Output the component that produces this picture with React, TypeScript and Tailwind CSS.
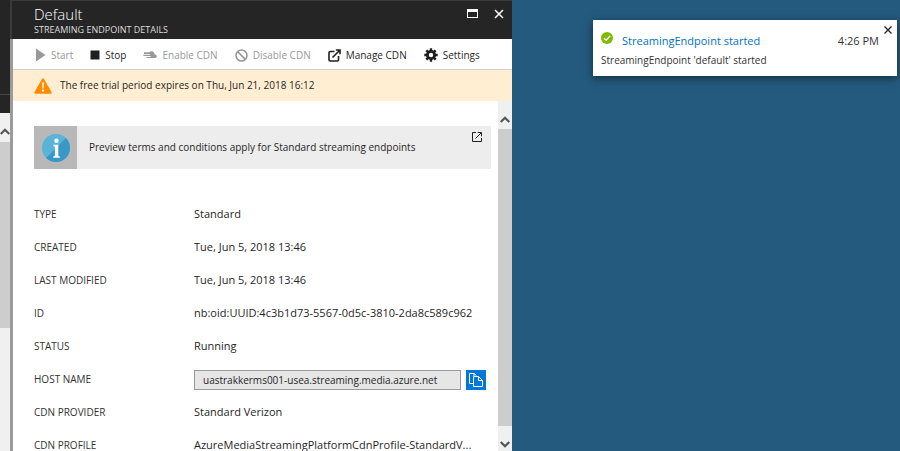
import type { ReactNode } from "react";

const details = [
  { label: "TYPE", value: "Standard" },
  { label: "CREATED", value: "Tue, Jun 5, 2018 13:46" },
  { label: "LAST MODIFIED", value: "Tue, Jun 5, 2018 13:46" },
  { label: "ID", value: "nb:oid:UUID:4c3b1d73-5567-0d5c-3810-2da8c589c962" },
  { label: "STATUS", value: "Running" },
  { label: "HOST NAME", value: "uastrakkerms001-usea.streaming.media.azure.net", copy: true },
  { label: "CDN PROVIDER", value: "Standard Verizon" },
  { label: "CDN PROFILE", value: "AzureMediaStreamingPlatformCdnProfile-StandardV..." },
];

function CloseIcon() {
  return (
    <svg className="size-[10px]" viewBox="0 0 10 10" fill="none" stroke="currentColor" strokeWidth="1.5">
      <path d="M1 1l8 8M9 1L1 9" />
    </svg>
  );
}

function Chevron({ down = false }: { down?: boolean }) {
  return (
    <svg className="h-[7px] w-[10px] text-[#555555]" viewBox="0 0 10 7" fill="none" stroke="currentColor" strokeWidth="2.2">
      {down ? <path d="M0.7 1l4.3 4.3L9.3 1" /> : <path d="M0.7 6L5 1.7 9.3 6" />}
    </svg>
  );
}

function PlayIcon() {
  return (
    <svg className="h-[14px] w-[11px]" viewBox="0 0 11 14" fill="currentColor">
      <path d="M1 0.500v13l9.500-6.500z" />
    </svg>
  );
}

function StopIcon() {
  return (
    <svg className="size-[10px]" viewBox="0 0 10 10" fill="currentColor">
      <path d="M0.500 0.500h9v9h-9z" />
    </svg>
  );
}

function CdnIcon() {
  return (
    <svg className="h-[9px] w-[14px]" viewBox="0 0 14 9" fill="currentColor">
      <path d="M1 1.200h5.200L7.400 0.400c1.600-.5 3.300.1 3.800 1.500l.3 1.400c1.400.1 2.200.9 2.200 2.100 0 1-.8 1.700-1.900 1.700H5.200c-1.300 0-2.100-.4-2.300-1.100h4.600v-.9H0.400v-1.300h6.500v-.9H1z" />
    </svg>
  );
}

function BlockedIcon() {
  return (
    <svg className="size-[13px]" viewBox="0 0 13 13" fill="none" stroke="currentColor" strokeWidth="1.600">
      <circle cx="6.500" cy="6.500" r="5.500" />
      <path d="M2.600 2.600l7.800 7.800" />
    </svg>
  );
}

function ManageIcon() {
  return (
    <svg className="size-[13px]" viewBox="0 0 13 13" fill="none" stroke="currentColor" strokeWidth="1.600">
      <path d="M6.500 2.500H2.300c-.8 0-1.300.5-1.300 1.300v6.900c0 .8.5 1.300 1.300 1.300h6.900c.8 0 1.300-.5 1.300-1.300V7" />
      <path d="M4.500 8.500L11.500 1.500M7.800 1H12v4.200" />
    </svg>
  );
}

function GearIcon() {
  return (
    <svg className="size-[14px]" viewBox="0 0 14 14" fill="none" stroke="currentColor">
      <circle cx="7" cy="7" r="3.600" strokeWidth="2.800" />
      <path
        strokeWidth="2.400"
        d="M7 0.300v2.700M7 11v2.700M0.300 7H3M11 7h2.700M2.300 2.300l1.800 1.800M9.900 9.900l1.800 1.800M2.300 11.700l1.800-1.800M9.900 4.100l1.800-1.800"
      />
    </svg>
  );
}

function WarningIcon() {
  return (
    <svg className="h-[16px] w-[18px]" viewBox="0 0 18 16">
      <path d="M8 0.900Q9 -0.500 10 0.900L17.500 14Q18 15.700 16.500 15.700H1.500Q0 15.700 0.500 14z" fill="#ff8c00" />
      <path d="M8.100 4.500h1.800L9.600 10.500H8.400z" fill="#fff" />
      <circle cx="9" cy="12.600" r="1.100" fill="#fff" />
    </svg>
  );
}

function InfoIcon() {
  return (
    <svg className="size-7" viewBox="0 0 28 28">
      <circle cx="14" cy="14" r="14" fill="#59b4d9" />
      <path d="M23.900 4.100A14 14 0 0 1 4.100 23.900z" fill="#3999c6" />
      <circle cx="14.500" cy="6.800" r="2.200" fill="#fff" />
      <path d="M11.300 10.800h5v11l1.500.8v1.200h-6.500v-1.200l1.600-.8V12.700l-1.600-.7z" fill="#fff" />
    </svg>
  );
}

function LaunchIcon() {
  return (
    <svg className="size-[10px]" viewBox="0 0 10 10" fill="none" stroke="currentColor" strokeWidth="1">
      <path d="M4 0.500H0.500v9h9V6M3.500 6.500L9 1M5.700 0.500h3.800v3.800" />
    </svg>
  );
}

function CopyIcon() {
  return (
    <svg className="size-[14px]" viewBox="0 0 14 14" fill="none" stroke="#fff" strokeWidth="1">
      <path d="M4.500 10.500h-4v-10h4.700L7.500 2.800M4.500 13.500v-10h5l4 4v6zM9.500 3.500v4h4" />
      <path d="M5 0.500v2.500" />
    </svg>
  );
}

function Command({ icon, disabled, children }: { icon: ReactNode; disabled?: boolean; children: ReactNode }) {
  return (
    <button
      type="button"
      disabled={disabled}
      className="flex items-center gap-[5px] text-[10px] whitespace-nowrap text-[#1f1f1f] disabled:text-[#999999]"
    >
      {icon}
      {children}
    </button>
  );
}

export default function App() {
  return (
    <div className="relative flex h-screen overflow-hidden bg-[#235a7d] font-['Open_Sans','Noto_Sans',sans-serif] text-[#1f1f1f]">
      <aside className="flex w-[10px] shrink-0 flex-col bg-[#f0f0f0]">
        <div className="h-[95px] shrink-0 border-b border-[#444444] bg-[#252525]" />
        <div className="h-[18px] shrink-0 bg-[#252525]" />
        <div className="flex h-[29px] shrink-0 items-center justify-center pt-2">
          <Chevron />
        </div>
        <div className="h-[186px] shrink-0 bg-[#cdcdcd]" />
      </aside>

      <main className="flex w-[502px] shrink-0 flex-col">
        <header className="flex h-[39px] shrink-0 justify-between border-t border-l-2 border-[#3b3b3b] bg-[#252525] pr-2 pl-[22px] text-white">
          <div className="pt-[3px]">
            <h1 className="text-[15px] leading-5 font-light">Default</h1>
            <p className="text-[9px] leading-3 text-[#dddddd]">STREAMING ENDPOINT DETAILS</p>
          </div>
          <div className="flex h-[25px] items-center gap-4">
            <button type="button" aria-label="Maximize" className="h-[9px] w-[11px] border border-t-[3px] border-white" />
            <button type="button" aria-label="Close blade">
              <CloseIcon />
            </button>
          </div>
        </header>

        <div className="flex min-h-0 flex-1 flex-col border-l-[3px] border-[#9b9b9b] bg-white">
          <nav className="flex h-[31px] shrink-0 items-center gap-[17px] border-b border-[#d0d0d0] pt-[2px] pl-[22px]">
            <Command icon={<PlayIcon />} disabled>Start</Command>
            <Command icon={<StopIcon />}>Stop</Command>
            <Command icon={<CdnIcon />} disabled>Enable CDN</Command>
            <Command icon={<BlockedIcon />} disabled>Disable CDN</Command>
            <Command icon={<ManageIcon />}>Manage CDN</Command>
            <Command icon={<GearIcon />}>Settings</Command>
          </nav>

          <div className="flex h-[31px] shrink-0 items-center gap-2 bg-[#ffeed2] pl-[21px] text-[10px]">
            <WarningIcon />
            The free trial period expires on Thu, Jun 21, 2018 16:12
          </div>

          <div className="flex min-h-0 flex-1">
            <div className="min-w-0 flex-1 overflow-hidden pt-[25px] pr-[7px] pl-[21px]">
              <div className="flex h-[43px] bg-[#ededed]">
                <div className="flex w-[43px] items-center justify-center bg-[#b8b8b8]">
                  <InfoIcon />
                </div>
                <p className="flex-1 self-center pl-3 text-[10px]">
                  Preview terms and conditions apply for Standard streaming endpoints
                </p>
                <a href="#terms" aria-label="Open preview terms" className="pt-[6px] pr-[9px]">
                  <LaunchIcon />
                </a>
              </div>

              <dl className="pt-[29px]">
                {details.map(({ label, value, copy }) => (
                  <div key={label} className="flex h-[33px] items-center">
                    <dt className="w-40 shrink-0 text-[10px] text-[#333333]">
                      {copy ? <label htmlFor="host-name">{label}</label> : label}
                    </dt>
                    {copy ? (
                      <dd className="flex flex-1 gap-[5px] pr-[5px]">
                        <input
                          id="host-name"
                          readOnly
                          value={value}
                          className="h-5 min-w-0 flex-1 border border-[#999999] bg-[#e6e6e6] px-2 text-[10px]"
                        />
                        <button
                          type="button"
                          aria-label="Copy host name"
                          className="flex size-5 items-center justify-center bg-[#0078d7]"
                        >
                          <CopyIcon />
                        </button>
                      </dd>
                    ) : (
                      <dd className="min-w-0 flex-1 text-[11px] whitespace-nowrap">{value}</dd>
                    )}
                  </div>
                ))}
              </dl>
            </div>

            <div className="flex w-[14px] shrink-0 flex-col items-center bg-[#f0f0f0]">
              <div className="flex h-7 shrink-0 items-center pt-2">
                <Chevron />
              </div>
              <div className="w-full flex-1 bg-[#cdcdcd]" />
              <div className="flex h-[25px] shrink-0 items-center pt-3">
                <Chevron down />
              </div>
            </div>
          </div>
        </div>
      </main>

      <section
        role="status"
        className="absolute top-5 right-[3px] w-[304px] bg-white pt-3 pr-[18px] pb-[6px] pl-2 shadow-[0_2px_8px_rgba(0,0,0,0.5)]"
      >
        <div className="flex items-start">
          <svg className="size-3" viewBox="0 0 12 12">
            <circle cx="6" cy="6" r="6" fill="#7fba00" />
            <path d="M3 6.200l2.200 2.100 3.900-4.400" fill="none" stroke="#fff" strokeWidth="1.400" />
          </svg>
          <a href="#streaming-endpoint" className="flex-1 pl-[9px] text-[11px] leading-[18px] text-[#0072c6]">
            StreamingEndpoint started
          </a>
          <time className="text-[11px] leading-[18px] text-[#333333]">4:26 PM</time>
        </div>
        <p className="text-[10px] leading-5 text-[#333333]">StreamingEndpoint 'default' started</p>
        <button type="button" aria-label="Dismiss" className="absolute top-[6px] right-[5px]">
          <svg className="size-2" viewBox="0 0 8 8" fill="none" stroke="#222" strokeWidth="1.300">
            <path d="M0.500 0.500l7 7M7.500 0.500l-7 7" />
          </svg>
        </button>
      </section>
    </div>
  );
}
